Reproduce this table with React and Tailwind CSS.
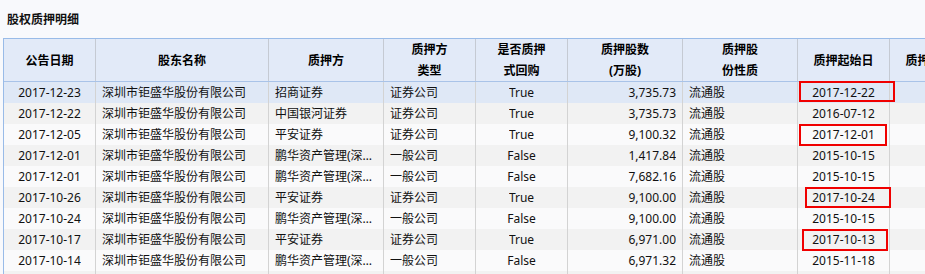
import React from 'react';

const company = '深圳市钜盛华股份有限公司';
const penghua = '鹏华资产管理(深圳)有限公司';

const rows = [
    ['2017-12-23', company, '招商证券', '证券公司', 'True', '3,735.73', '流通股', '2017-12-22'],
    ['2017-12-22', company, '中国银河证券', '证券公司', 'True', '3,735.73', '流通股', '2016-07-12'],
    ['2017-12-05', company, '平安证券', '证券公司', 'True', '9,100.32', '流通股', '2017-12-01'],
    ['2017-12-01', company, penghua, '一般公司', 'False', '1,417.84', '流通股', '2015-10-15'],
    ['2017-12-01', company, penghua, '一般公司', 'False', '7,682.16', '流通股', '2015-10-15'],
    ['2017-10-26', company, '平安证券', '证券公司', 'True', '9,100.00', '流通股', '2017-10-24'],
    ['2017-10-24', company, penghua, '一般公司', 'False', '9,100.00', '流通股', '2015-10-15'],
    ['2017-10-17', company, '平安证券', '证券公司', 'True', '6,971.00', '流通股', '2017-10-13'],
    ['2017-10-14', company, penghua, '一般公司', 'False', '6,971.32', '流通股', '2015-11-18'],
    ['', '', '', '', '', '', '', ''],
];

// width + alignment for every column (last one is cut off by the window)
const cols = [
    { w: 'w-[92px]', align: 'justify-center' },
    { w: 'w-[173px]', align: 'justify-start' },
    { w: 'w-[115px]', align: 'justify-start' },
    { w: 'w-[92px]', align: 'justify-start' },
    { w: 'w-[92px]', align: 'justify-center' },
    { w: 'w-[115px]', align: 'justify-end' },
    { w: 'w-[115px]', align: 'justify-start' },
    { w: 'w-[92px]', align: 'justify-center' },
    { w: 'w-[92px]', align: 'justify-center' },
];

const headers = [
    ['公告日期'],
    ['股东名称'],
    ['质押方'],
    ['质押方', '类型'],
    ['是否质押', '式回购'],
    ['质押股数', '(万股)'],
    ['质押股', '份性质'],
    ['质押起始日'],
    ['质押截止日'],
];

// red annotation boxes drawn over the table (page coordinates)
const marks = [
    'left-[799px] top-[81px] w-[96px] h-[21px]',
    'left-[799px] top-[124px] w-[88px] h-[22px]',
    'left-[805px] top-[187px] w-[86px] h-[21px]',
    'left-[802px] top-[229px] w-[86px] h-[22px]',
];

export default function App() {
    return (
        <div
            className="relative w-[925px] h-[274px] overflow-hidden bg-[#f8f9fc] text-[12px] text-[#111]"
            style={{ fontFamily: '"Noto Sans", "Noto Sans CJK SC", sans-serif' }}
        >
            <div className="h-[38px] pl-[7px] flex items-center font-bold text-[12px] text-[#111] pt-[1px]">
                股权质押明细
            </div>

            <div className="ml-[3px] w-[980px] border-l border-t border-[#99bbe8]">
                {/* header */}
                <div className="flex h-[43px] bg-[#e2eaf8] border-b border-[#a9c3e8]">
                    {headers.map((lines, i) => (
                        <div
                            key={i}
                            className={`${cols[i].w} shrink-0 border-r border-[#c5cad3] flex flex-col items-center justify-center font-bold leading-[21px] text-black`}
                        >
                            {lines.map((l, j) => (
                                <span key={j}>{l}</span>
                            ))}
                        </div>
                    ))}
                </div>

                {/* body */}
                {rows.map((r, ri) => (
                    <div
                        key={ri}
                        className={`flex h-[21px] ${ri === 0 ? 'bg-[#dfe8f6]' : ri % 2 === 1 ? 'bg-[#f2f2f2]' : 'bg-[#fafafb]'}`}
                    >
                        {r.concat(['']).map((c, ci) => (
                            <div
                                key={ci}
                                className={`${cols[ci].w} ${cols[ci].align} shrink-0 border-r border-[#d3d3d3] flex items-center px-[6px] overflow-hidden leading-[21px]`}
                            >
                                <span className="truncate">{c}</span>
                            </div>
                        ))}
                    </div>
                ))}
            </div>

            {marks.map((m, i) => (
                <div key={i} className={`absolute ${m} border-2 border-[#f00000]`} />
            ))}
        </div>
    );
}
